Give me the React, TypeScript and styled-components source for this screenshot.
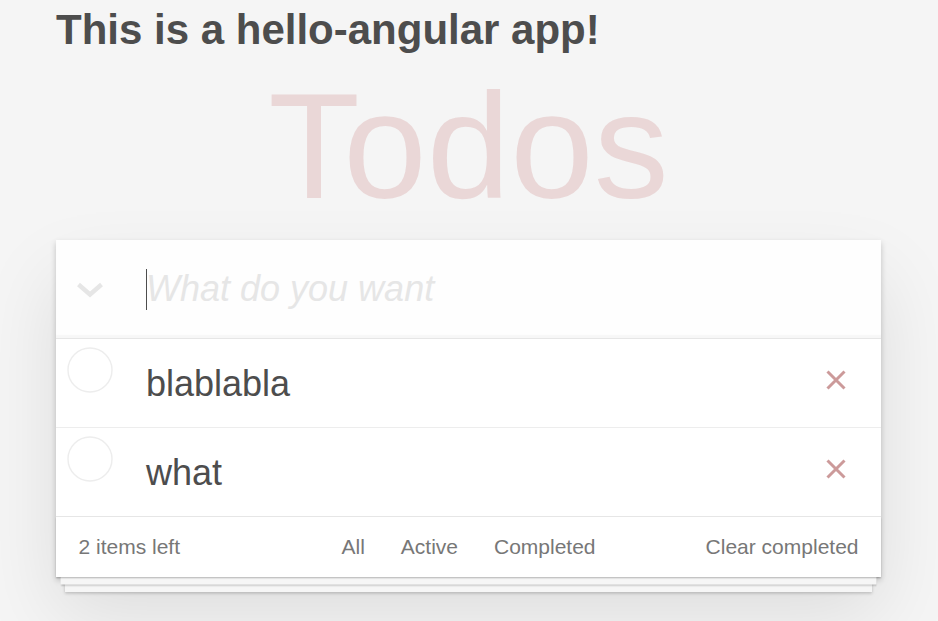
import React, { useState } from "react";
import styled, { createGlobalStyle } from "styled-components";

type Todo = { id: number; title: string; completed: boolean };

const GlobalStyle = createGlobalStyle`
  html,
  body {
    margin: 0;
    padding: 0;
    background: #f5f5f5;
  }
  body {
    font-family: "Liberation Sans", Arial, sans-serif;
    font-size: 21px;
    line-height: 29.4px;
    font-weight: 300;
    color: #4d4d4d;
    -webkit-font-smoothing: antialiased;
  }
  #root {
    min-height: 100vh;
  }
  button {
    margin: 0;
    padding: 0;
    border: 0;
    background: none;
    font: inherit;
    color: inherit;
  }
`;

const App = (): JSX.Element => {
  const [todos] = useState<Todo[]>([
    { id: 1, title: "blablabla", completed: false },
    { id: 2, title: "what", completed: false },
  ]);
  const [text, setText] = useState("");
  const left = todos.filter((t) => !t.completed).length;

  return (
    <Page>
      <GlobalStyle />
      <Greeting>This is a hello-angular app!</Greeting>
      <Title>Todos</Title>
      <TodoApp>
        <Header>
          <ToggleAll aria-label="Mark all as complete">
            <svg width="28" height="16" viewBox="0 0 28 16">
              <polyline
                points="2.5,2.5 14,12.5 25.5,2.5"
                fill="none"
                stroke="#e6e6e6"
                strokeWidth="4.4"
              />
            </svg>
          </ToggleAll>
          {text === "" && <Caret />}
          <NewTodo
            autoFocus
            placeholder="What do you want"
            value={text}
            onChange={(ele) => setText(ele.currentTarget.value)}
          />
        </Header>
        <TodoList>
          {todos.map((todo) => (
            <TodoItem key={todo.id}>
              <Toggle>
                <svg width="46" height="46" viewBox="0 0 46 46">
                  <circle
                    cx="23"
                    cy="23"
                    r="22"
                    fill="none"
                    stroke="#ededed"
                    strokeWidth="1.4"
                  />
                </svg>
              </Toggle>
              <Label>{todo.title}</Label>
              <Destroy aria-label="Delete">
                <svg width="20" height="20" viewBox="0 0 20 20">
                  <path
                    d="M1.5 1.5 L18.5 18.5 M18.5 1.5 L1.5 18.5"
                    stroke="#cc9a9a"
                    strokeWidth="3"
                  />
                </svg>
              </Destroy>
            </TodoItem>
          ))}
        </TodoList>
        <Footer>
          <Count>{left} items left</Count>
          <Filters>
            <FilterLink>All</FilterLink>
            <FilterLink>Active</FilterLink>
            <FilterLink>Completed</FilterLink>
          </Filters>
          <ClearButton>Clear completed</ClearButton>
        </Footer>
      </TodoApp>
    </Page>
  );
};

const Page = styled.div`
  width: 825px;
  margin: 0 0 0 56px;
`;

const Greeting = styled.h1`
  margin: 0;
  padding-top: 15px;
  font-size: 42px;
  line-height: 29.4px;
  font-weight: 700;
  color: #4d4d4d;
`;

const Title = styled.h1`
  margin: 26.3px 0 19.3px;
  font-size: 150px;
  line-height: 150px;
  font-weight: 100;
  text-align: center;
  color: rgba(175, 47, 47, 0.15);
  text-rendering: optimizeLegibility;
`;

const TodoApp = styled.section`
  background: #fff;
  box-shadow: 0 3px 6px 0 rgba(0, 0, 0, 0.2), 0 37.5px 75px 0 rgba(0, 0, 0, 0.1);
`;

const Header = styled.header`
  display: flex;
  align-items: center;
  height: 98px;
  background: rgba(0, 0, 0, 0.003);
  box-shadow: inset 0 -3px 1.5px rgba(0, 0, 0, 0.03);
`;

const ToggleAll = styled.button`
  flex: none;
  width: 67.5px;
  height: 100%;
  margin-right: 22.5px;
  display: flex;
  align-items: center;
  justify-content: center;
  padding-top: 2px;
`;

const Caret = styled.span`
  flex: none;
  width: 1px;
  height: 41px;
  margin: 0 -1px 0 0;
  background: #4d4d4d;
`;

const NewTodo = styled.input`
  flex: 1;
  min-width: 0;
  box-sizing: border-box;
  height: 98px;
  padding: 24px 24px 24px 0;
  border: none;
  outline: none;
  background: transparent;
  font-family: inherit;
  font-size: 36px;
  line-height: 50.4px;
  font-weight: 300;
  color: inherit;
  caret-color: transparent;

  &::placeholder {
    font-style: italic;
    font-weight: 300;
    color: #e6e6e6;
  }
`;

const TodoList = styled.ul`
  margin: 0;
  padding: 0;
  list-style: none;
  border-top: 1px solid #e6e6e6;
`;

const TodoItem = styled.li`
  display: flex;
  align-items: flex-start;
  font-size: 36px;
  border-bottom: 1px solid #ededed;

  &:last-child {
    border-bottom: none;
  }
`;

const Toggle = styled.span`
  flex: none;
  width: 67.5px;
  display: flex;
  justify-content: center;
  padding-top: 7.5px;
`;

const Label = styled.label`
  flex: 1;
  padding: 22.5px 0 22.5px 22.5px;
  line-height: 43px;
  word-break: break-all;
`;

const Destroy = styled.button`
  flex: none;
  align-self: center;
  width: 60px;
  height: 60px;
  margin: 0 15.5px 6px 0;
  display: flex;
  align-items: center;
  justify-content: center;
`;

const Footer = styled.footer`
  display: grid;
  grid-template-columns: 1fr auto 1fr;
  align-items: center;
  height: 30px;
  padding: 14.5px 22.5px 15.5px;
  border-top: 1px solid #e6e6e6;
  line-height: 30px;
  color: #777;
  box-shadow: 0 1.5px 1.5px rgba(0, 0, 0, 0.2), 0 12px 0 -4.5px #f6f6f6,
    0 13.5px 1.5px -4.5px rgba(0, 0, 0, 0.2), 0 24px 0 -9px #f6f6f6,
    0 25.5px 3px -9px rgba(0, 0, 0, 0.2);
`;

const Count = styled.span`
  justify-self: start;
`;

const Filters = styled.ul`
  display: flex;
  gap: 4px;
  margin: 0;
  padding: 0;
  list-style: none;
`;

const FilterLink = styled.li`
  margin: 0 4.5px;
  padding: 0 10.5px;
  border: 1.5px solid transparent;
  border-radius: 4.5px;
  line-height: 27px;
`;

const ClearButton = styled.button`
  justify-self: end;
  line-height: 30px;
  color: #777;
`;

export default App;
